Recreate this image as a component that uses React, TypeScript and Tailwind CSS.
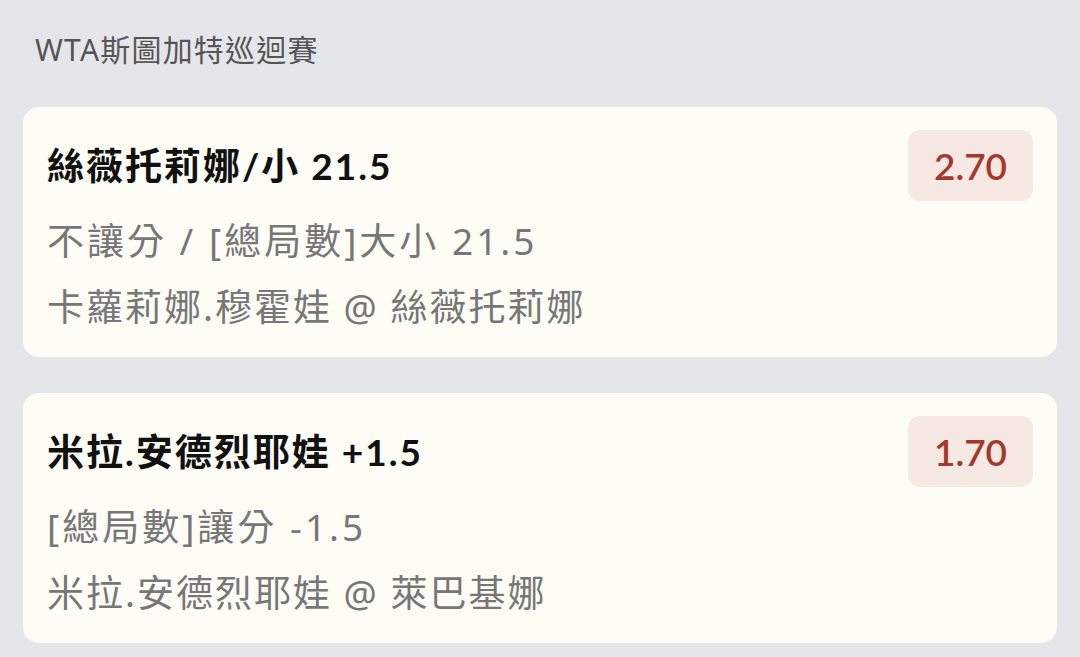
import React from "react";

const bets = [
  {
    title: "絲薇托莉娜/小 21.5",
    line2: "不讓分 / [總局數]大小 21.5",
    line3: "卡蘿莉娜.穆霍娃 @ 絲薇托莉娜",
    odds: "2.70",
  },
  {
    title: "米拉.安德烈耶娃 +1.5",
    line2: "[總局數]讓分 -1.5",
    line3: "米拉.安德烈耶娃 @ 萊巴基娜",
    odds: "1.70",
  },
];

export default function App() {
  return (
    <div
      className="w-[1080px] h-[657px] overflow-hidden bg-[#e5e6ea] px-[23px]"
      style={{ fontFamily: '"Noto Sans", "Noto Sans CJK TC", sans-serif' }}
    >
      <div className="pt-[30px] pb-[37px] pl-[12px] text-[30px] leading-[40px] text-[#555555] tracking-[1.2px]">
        WTA斯圖加特巡迴賽
      </div>
      <div className="flex flex-col gap-[36px]">
        {bets.map((b) => (
          <div
            key={b.title}
            className="rounded-[16px] bg-[#fdfdf5] pt-[23px] pb-[17px] pl-[24px] pr-[24px]"
          >
            <div className="flex items-center justify-between h-[71px]">
              <div
                className="text-[37px] font-bold text-[#111111] leading-[44px] tracking-[2px]"
                style={{ fontFamily: '"Lato", "Noto Sans CJK TC", sans-serif' }}
              >
                {b.title}
              </div>
              <div
                className="w-[125px] h-[71px] rounded-[12px] bg-[#f6e8e2] flex items-center justify-center text-[37px] font-semibold text-[#a6372b]"
                style={{ fontFamily: '"Lato", sans-serif' }}
              >
                {b.odds}
              </div>
            </div>
            <div className="mt-[7px] text-[37px] leading-[66px] text-[#777777] tracking-[3px]">
              {b.line2}
            </div>
            <div className="text-[37px] leading-[66px] text-[#777777] tracking-[2px]">
              {b.line3}
            </div>
          </div>
        ))}
      </div>
    </div>
  );
}
